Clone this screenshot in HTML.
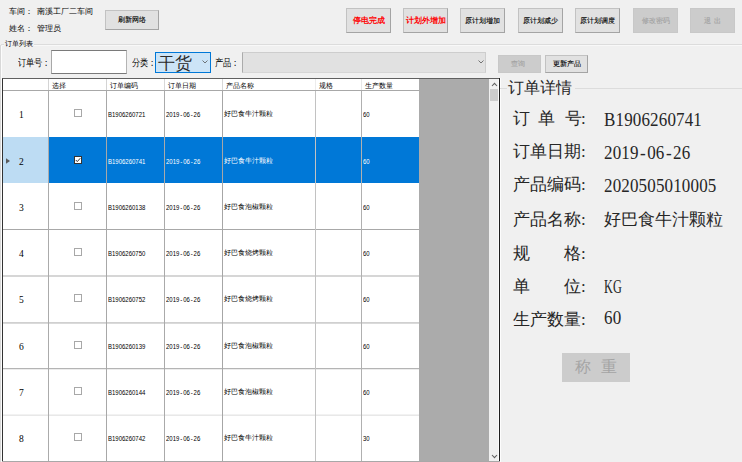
<!DOCTYPE html><html><head><meta charset="utf-8"><style>
*{margin:0;padding:0;box-sizing:border-box}
html,body{width:742px;height:462px;overflow:hidden;background:#f0f0f0}
body{position:relative;font-family:"Liberation Sans",sans-serif;color:#000}
.a{position:absolute;white-space:nowrap}
.btn{position:absolute;background:#e1e1e1;border:1px solid #c2c2c2;border-right-color:#a4a4a4;border-bottom-color:#a4a4a4;font-size:7px;display:flex;align-items:center;justify-content:center;white-space:nowrap;-webkit-text-stroke:0.12px currentColor}
.dis{background:#cccccc;border-color:#c8c8c8;color:#a3a3a3}
.red{color:#ff0000;font-weight:bold;font-size:7.5px;-webkit-text-stroke:0}
.t8{font-size:8px;line-height:8px;}
.sl{transform:scaleY(1.22);transform-origin:0 50%}
.t7{font-size:7px;line-height:7px}
.hl{position:absolute;height:1px;background:#a0a0a0}
.vl{position:absolute;width:1px;background:#a0a0a0}
.cell{position:absolute;font-size:7px;line-height:7px;white-space:nowrap}
.num{font-size:6px;transform:scaleY(1.18);transform-origin:0 75%}
.val{transform:scaleY(1.12);transform-origin:50% 80%;letter-spacing:0.15px}
.det{position:absolute;font-family:"Liberation Serif",serif;font-size:17px;line-height:17px;white-space:nowrap;color:#262626}
</style></head><body>
<div class="a t8" style="left:9px;top:8px">车间：</div>
<div class="a t8" style="left:37px;top:8px">南溪工厂二车间</div>
<div class="a t8" style="left:9px;top:25px">姓名：</div>
<div class="a t8" style="left:37px;top:25px">管理员</div>
<div class="btn" style="left:105px;top:10px;width:54px;height:20px">刷新网络</div>
<div class="btn red" style="left:346px;top:8px;width:45px;height:25px"><span>停电完成</span></div>
<div class="btn red" style="left:403px;top:8px;width:45px;height:25px"><span>计划外增加</span></div>
<div class="btn " style="left:460px;top:8px;width:45px;height:25px"><span>原计划增加</span></div>
<div class="btn " style="left:518px;top:8px;width:45px;height:25px"><span>原计划减少</span></div>
<div class="btn " style="left:575px;top:8px;width:45px;height:25px"><span>原计划调度</span></div>
<div class="btn dis" style="left:633px;top:8px;width:45px;height:25px"><span>修改密码</span></div>
<div class="btn dis" style="left:690px;top:8px;width:45px;height:25px"><span>退&nbsp;&nbsp;出</span></div>
<div class="a" style="left:1px;top:44px;width:741px;height:1px;background:#dcdcdc"></div>
<div class="a" style="left:2px;top:45px;width:740px;height:1px;background:#f8f8f8"></div>
<div class="a" style="left:0px;top:45px;width:1px;height:417px;background:#d8d8d8"></div>
<div class="a" style="left:1px;top:46px;width:1px;height:416px;background:#fcfcfc"></div>
<div class="a t7" style="left:4px;top:40px;background:#f0f0f0;padding:0 1px">订单列表</div>
<div class="a t8 sl" style="left:18px;top:60px">订单号：</div>
<div class="a" style="left:51px;top:50px;width:76px;height:24px;background:#fff;border:1px solid #7a7a7a;border-left-color:#a8a8a8;border-right-color:#b4b4b4"></div>
<div class="a t8 sl" style="left:132px;top:60px">分类：</div>
<div class="a" style="left:155px;top:52px;width:56px;height:21px;background:#cce4f7;border:1px solid #0078d7"></div>
<div class="a" style="left:158px;top:54px;font-size:16.5px;line-height:18px;color:#2a2a2a">干货</div>
<svg class="a" style="left:202px;top:60px" width="6" height="4"><path d="M0.5 0.5 L3 3 L5.5 0.5" stroke="#555" fill="none" stroke-width="0.8"/></svg>
<div class="a t8 sl" style="left:215px;top:60px">产品：</div>
<div class="a" style="left:242px;top:52px;width:244px;height:21px;background:#e1e1e1;border:1px solid #cdcdcd;border-left-color:#ababab;border-bottom-color:#d6d6d6"></div>
<svg class="a" style="left:478px;top:60px" width="6" height="4"><path d="M0.5 0.5 L3 3 L5.5 0.5" stroke="#555" fill="none" stroke-width="0.8"/></svg>
<div class="btn dis" style="left:498px;top:55px;width:43px;height:18px;padding-right:3px">查询</div>
<div class="btn" style="left:545px;top:55px;width:43px;height:18px">更新产品</div>
<div class="a" style="left:2px;top:78px;width:498px;height:384px;background:#fff;border-top:1px solid #606060;border-left:1px solid #333"></div>
<div class="a" style="left:419px;top:79px;width:70px;height:383px;background:#ababab"></div>
<div class="a" style="left:3px;top:137px;width:45px;height:46px;background:#bddcf3"></div>
<div class="a" style="left:49px;top:137px;width:370px;height:46px;background:#0078d7"></div>
<div class="hl" style="left:3px;top:90px;width:416px;background:#a8a8a8"></div>
<div class="hl" style="left:3px;top:229px;width:416px;background:#a8a8a8"></div>
<div class="hl" style="left:3px;top:275px;width:416px;background:#d6d6d6"></div>
<div class="hl" style="left:3px;top:276px;width:416px;background:#d6d6d6"></div>
<div class="hl" style="left:3px;top:322px;width:416px;background:#d0d0d0"></div>
<div class="hl" style="left:3px;top:323px;width:416px;background:#dadada"></div>
<div class="hl" style="left:3px;top:368px;width:416px;background:#b4b4b4"></div>
<div class="hl" style="left:3px;top:369px;width:416px;background:#ececec"></div>
<div class="hl" style="left:3px;top:414px;width:416px;background:#f2f2f2"></div>
<div class="hl" style="left:3px;top:415px;width:416px;background:#e8e8e8"></div>
<div class="vl" style="left:48px;top:79px;height:11px;background:#d4d4d4"></div>
<div class="vl" style="left:48px;top:91px;height:371px;background:#ababab"></div>
<div class="vl" style="left:106px;top:79px;height:11px;background:#d4d4d4"></div>
<div class="vl" style="left:106px;top:91px;height:371px;background:#a8a8a8"></div>
<div class="vl" style="left:164px;top:79px;height:11px;background:#d8d8d8"></div>
<div class="vl" style="left:164px;top:91px;height:371px;background:#aaaaaa"></div>
<div class="vl" style="left:222px;top:79px;height:11px;background:#d8d8d8"></div>
<div class="vl" style="left:222px;top:91px;height:371px;background:#a6a6a6"></div>
<div class="vl" style="left:315px;top:79px;height:11px;background:#ececec"></div>
<div class="vl" style="left:315px;top:91px;height:371px;background:#c2c2c2"></div>
<div class="vl" style="left:361px;top:79px;height:11px;background:#e8e8e8"></div>
<div class="vl" style="left:361px;top:91px;height:371px;background:#b0b0b0"></div>
<div class="cell" style="left:52px;top:81.5px">选择</div>
<div class="cell" style="left:110px;top:81.5px">订单编码</div>
<div class="cell" style="left:168px;top:81.5px">订单日期</div>
<div class="cell" style="left:226px;top:81.5px">产品名称</div>
<div class="cell" style="left:319px;top:81.5px">规格</div>
<div class="cell" style="left:365px;top:81.5px">生产数量</div>
<div class="a" style="left:19px;top:111px;font-family:'Liberation Serif',serif;font-size:9.5px;line-height:9px;color:#000">1</div>
<div class="a" style="left:74px;top:109px;width:8px;height:8px;background:#fff;border:0.8px solid #a8a8a8"></div>
<div class="cell num" style="left:108px;top:111.5px;color:#000">B1906260721</div>
<div class="cell num" style="left:166px;top:111.5px;color:#000">2019<span style="margin:0 0.9px">-</span>06<span style="margin:0 0.9px">-</span>26</div>
<div class="cell" style="left:224px;top:110px;color:#000">好巴食牛汁颗粒</div>
<div class="cell num" style="left:363px;top:111.5px;color:#000">60</div>
<div class="a" style="left:19px;top:158px;font-family:'Liberation Serif',serif;font-size:9.5px;line-height:9px;color:#000">2</div>
<svg class="a" style="left:6px;top:158px" width="5" height="6"><path d="M0 0.3 L4 3 L0 5.7Z" fill="#5a5a5a"/></svg>
<div class="a" style="left:74px;top:156px;width:8px;height:8px;background:#fff;border:0.8px solid #333"></div>
<svg class="a" style="left:74px;top:156px" width="8" height="8"><path d="M1.8 4 L3.3 5.6 L6.3 2.2" stroke="#222" fill="none" stroke-width="0.9"/></svg>
<div class="cell num" style="left:108px;top:158.5px;color:#fff">B1906260741</div>
<div class="cell num" style="left:166px;top:158.5px;color:#fff">2019<span style="margin:0 0.9px">-</span>06<span style="margin:0 0.9px">-</span>26</div>
<div class="cell" style="left:224px;top:157px;color:#fff">好巴食牛汁颗粒</div>
<div class="cell num" style="left:363px;top:158.5px;color:#fff">60</div>
<div class="a" style="left:19px;top:204px;font-family:'Liberation Serif',serif;font-size:9.5px;line-height:9px;color:#000">3</div>
<div class="a" style="left:74px;top:202px;width:8px;height:8px;background:#fff;border:0.8px solid #a8a8a8"></div>
<div class="cell num" style="left:108px;top:204.5px;color:#000">B1906260138</div>
<div class="cell num" style="left:166px;top:204.5px;color:#000">2019<span style="margin:0 0.9px">-</span>06<span style="margin:0 0.9px">-</span>26</div>
<div class="cell" style="left:224px;top:203px;color:#000">好巴食泡椒颗粒</div>
<div class="cell num" style="left:363px;top:204.5px;color:#000">60</div>
<div class="a" style="left:19px;top:250px;font-family:'Liberation Serif',serif;font-size:9.5px;line-height:9px;color:#000">4</div>
<div class="a" style="left:74px;top:248px;width:8px;height:8px;background:#fff;border:0.8px solid #a8a8a8"></div>
<div class="cell num" style="left:108px;top:250.5px;color:#000">B1906260750</div>
<div class="cell num" style="left:166px;top:250.5px;color:#000">2019<span style="margin:0 0.9px">-</span>06<span style="margin:0 0.9px">-</span>26</div>
<div class="cell" style="left:224px;top:249px;color:#000">好巴食烧烤颗粒</div>
<div class="cell num" style="left:363px;top:250.5px;color:#000">60</div>
<div class="a" style="left:19px;top:296px;font-family:'Liberation Serif',serif;font-size:9.5px;line-height:9px;color:#000">5</div>
<div class="a" style="left:74px;top:294px;width:8px;height:8px;background:#fff;border:0.8px solid #a8a8a8"></div>
<div class="cell num" style="left:108px;top:296.5px;color:#000">B1906260752</div>
<div class="cell num" style="left:166px;top:296.5px;color:#000">2019<span style="margin:0 0.9px">-</span>06<span style="margin:0 0.9px">-</span>26</div>
<div class="cell" style="left:224px;top:295px;color:#000">好巴食烧烤颗粒</div>
<div class="cell num" style="left:363px;top:296.5px;color:#000">60</div>
<div class="a" style="left:19px;top:343px;font-family:'Liberation Serif',serif;font-size:9.5px;line-height:9px;color:#000">6</div>
<div class="a" style="left:74px;top:341px;width:8px;height:8px;background:#fff;border:0.8px solid #a8a8a8"></div>
<div class="cell num" style="left:108px;top:343.5px;color:#000">B1906260139</div>
<div class="cell num" style="left:166px;top:343.5px;color:#000">2019<span style="margin:0 0.9px">-</span>06<span style="margin:0 0.9px">-</span>26</div>
<div class="cell" style="left:224px;top:342px;color:#000">好巴食泡椒颗粒</div>
<div class="cell num" style="left:363px;top:343.5px;color:#000">60</div>
<div class="a" style="left:19px;top:389px;font-family:'Liberation Serif',serif;font-size:9.5px;line-height:9px;color:#000">7</div>
<div class="a" style="left:74px;top:387px;width:8px;height:8px;background:#fff;border:0.8px solid #a8a8a8"></div>
<div class="cell num" style="left:108px;top:389.5px;color:#000">B1906260144</div>
<div class="cell num" style="left:166px;top:389.5px;color:#000">2019<span style="margin:0 0.9px">-</span>06<span style="margin:0 0.9px">-</span>26</div>
<div class="cell" style="left:224px;top:388px;color:#000">好巴食泡椒颗粒</div>
<div class="cell num" style="left:363px;top:389.5px;color:#000">60</div>
<div class="a" style="left:19px;top:435px;font-family:'Liberation Serif',serif;font-size:9.5px;line-height:9px;color:#000">8</div>
<div class="a" style="left:74px;top:433px;width:8px;height:8px;background:#fff;border:0.8px solid #a8a8a8"></div>
<div class="cell num" style="left:108px;top:435.5px;color:#000">B1906260742</div>
<div class="cell num" style="left:166px;top:435.5px;color:#000">2019<span style="margin:0 0.9px">-</span>06<span style="margin:0 0.9px">-</span>26</div>
<div class="cell" style="left:224px;top:434px;color:#000">好巴食牛汁颗粒</div>
<div class="cell num" style="left:363px;top:435.5px;color:#000">30</div>
<div class="a" style="left:489px;top:79px;width:10px;height:383px;background:#f0f0f0"></div>
<div class="a" style="left:490px;top:89px;width:8px;height:12px;background:#cdcdcd"></div>
<svg class="a" style="left:491px;top:82px" width="7" height="5"><path d="M1 4 L3.5 1.3 L6 4" stroke="#606060" fill="none" stroke-width="1.1"/></svg>
<svg class="a" style="left:491px;top:454px" width="7" height="5"><path d="M1 1 L3.5 3.7 L6 1" stroke="#606060" fill="none" stroke-width="1.1"/></svg>
<div class="a" style="left:499px;top:78px;width:1px;height:384px;background:#1e1e1e"></div>
<div class="a" style="left:498px;top:79px;width:1px;height:383px;background:#fafafa"></div>
<div class="a" style="left:500px;top:78px;width:1px;height:384px;background:#fdfdfd"></div>
<div class="a" style="left:2px;top:461px;width:498px;height:1px;background:#a8a8a8"></div>
<div class="a" style="left:500px;top:88px;width:242px;height:1px;background:#dcdcdc"></div>
<div class="det" style="left:507px;top:80px;background:#f0f0f0;padding:0 3px 0 1px;font-family:'Liberation Sans',sans-serif;font-size:16px;line-height:16px">订单详情</div>
<div class="det" style="left:513px;top:110px">订<span style="position:absolute;left:25px;top:0">单</span><span style="position:absolute;left:51.5px;top:0">号</span><span style="position:absolute;left:68px;top:0">:</span></div>
<div class="det val" style="left:604px;top:112px">B1906260741</div>
<div class="det" style="left:513px;top:143px">订单日期<span style="position:absolute;left:68px;top:0">:</span></div>
<div class="det val" style="left:604px;top:145px">2019<span style="margin:0 1.4px">-</span>06<span style="margin:0 1.4px">-</span>26</div>
<div class="det" style="left:513px;top:176px">产品编码<span style="position:absolute;left:68px;top:0">:</span></div>
<div class="det val" style="left:604px;top:178px">2020505010005</div>
<div class="det" style="left:513px;top:211px">产品名称<span style="position:absolute;left:68px;top:0">:</span></div>
<div class="det" style="left:604px;top:211px;font-size:16.7px">好巴食牛汁颗粒</div>
<div class="det" style="left:513px;top:245px">规　　格<span style="position:absolute;left:68px;top:0">:</span></div>
<div class="det" style="left:513px;top:278px">单　　位<span style="position:absolute;left:68px;top:0">:</span></div>
<div class="det val" style="left:604px;top:279px;transform:scale(0.72,1.12);transform-origin:0 80%">KG</div>
<div class="det" style="left:513px;top:310.5px">生产数量<span style="position:absolute;left:68px;top:0">:</span></div>
<div class="det val" style="left:604px;top:310px">60</div>
<div class="btn dis" style="left:562px;top:353px;width:68px;height:29px;border-color:#cccccc"></div>
<div class="det" style="left:575px;top:359px;color:#a4a4a4;font-size:15.5px;line-height:16px">称</div>
<div class="det" style="left:600.5px;top:359px;color:#a4a4a4;font-size:15.5px;line-height:16px">重</div>
</body></html>
